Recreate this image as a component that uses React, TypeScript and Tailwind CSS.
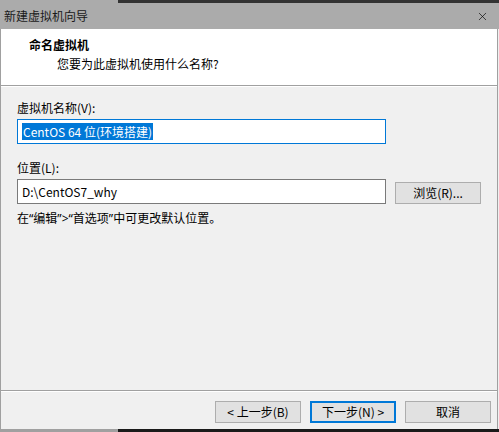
import { X } from 'lucide-react';

const font = { fontFamily: '"Noto Sans CJK SC", "Noto Sans", sans-serif' };
const latin = { fontFamily: '"Noto Sans", sans-serif' };

function Button({ children, primary = false }: { children: React.ReactNode; primary?: boolean }) {
  return (
    <button
      className={
        primary
          ? 'w-[86px] h-[22px] bg-[#e1e1e1] border-2 border-[#0078d7] text-[12px] leading-none text-black'
          : 'w-[86px] h-[22px] bg-[#e1e1e1] border border-[#adadad] text-[12px] leading-none text-black'
      }
    >
      {children}
    </button>
  );
}

export default function App() {
  return (
    <div className="w-[499px] h-[432px] bg-[#f0f0f0] flex flex-col overflow-hidden text-black" style={font}>
      {/* strip of the window behind */}
      <div className="flex h-[3px] shrink-0">
        <div className="w-[118px] bg-[#ababab]" />
        <div className="flex-1 bg-[#333333]" />
      </div>

      {/* title bar */}
      <div className="h-[26px] shrink-0 bg-[#ababab] flex items-center justify-between pl-[4px] pr-[10px]">
        <span className="text-[12px] leading-none text-[#1a1a1a]">新建虚拟机向导</span>
        <X className="w-[13px] h-[13px] text-black" strokeWidth={1.2} />
      </div>

      <div className="flex-1 flex flex-col border-l border-[#a0a0a0] mr-[1px] border-r border-r-[#a0a0a0]">
        {/* header */}
        <div className="h-[57px] shrink-0 bg-white border-b border-[#a0a0a0] pt-[8px]">
          <div className="pl-[28px] text-[12px] font-bold leading-[16px]">命名虚拟机</div>
          <div className="pl-[56px] mt-[3px] text-[12px] leading-[16px]">您要为此虚拟机使用什么名称?</div>
        </div>
        <div className="h-px bg-white" />

        {/* body */}
        <div className="flex-1 pl-[16px] pt-[13px]">
          <div className="text-[12px] leading-[16px]">虚拟机名称(V):</div>
          <div className="mt-[3px] w-[369px] h-[25px] bg-white border border-[#0078d7] flex items-center pl-[4px]">
            <span className="bg-[#0078d7] text-white text-[12px] leading-[17px] px-[1px]">CentOS 64 位(环境搭建)</span>
          </div>

          <div className="mt-[16px] text-[12px] leading-[16px]">位置(L):</div>
          <div className="mt-[3px] flex items-center">
            <div className="w-[369px] h-[25px] bg-white border border-[#7a7a7a] flex items-center pl-[4px]">
              <span className="text-[12px] leading-[17px]">D:\CentOS7_why</span>
            </div>
            <div className="ml-[9px]">
              <Button>浏览(R)...</Button>
            </div>
          </div>
          <div className="mt-[6px] text-[12px] leading-[16px]">
            在<span style={latin}>“</span>编辑<span style={latin}>”&gt;“</span>首选项<span style={latin}>”</span>中可更改默认位置。
          </div>
        </div>

        {/* footer */}
        <div className="h-px bg-[#a0a0a0]" />
        <div className="h-px bg-white" />
        <div className="h-[37px] shrink-0 flex items-start justify-end gap-[9px] pr-[6px] pt-[9px]">
          <Button>&lt; 上一步(B)</Button>
          <Button primary>下一步(N) &gt;</Button>
          <Button>取消</Button>
        </div>
      </div>

      <div className="flex h-[3px] shrink-0">
        <div className="w-[118px] bg-[#a0a0a0]" />
        <div className="flex-1 bg-[#1a1a1a]" />
      </div>
    </div>
  );
}
